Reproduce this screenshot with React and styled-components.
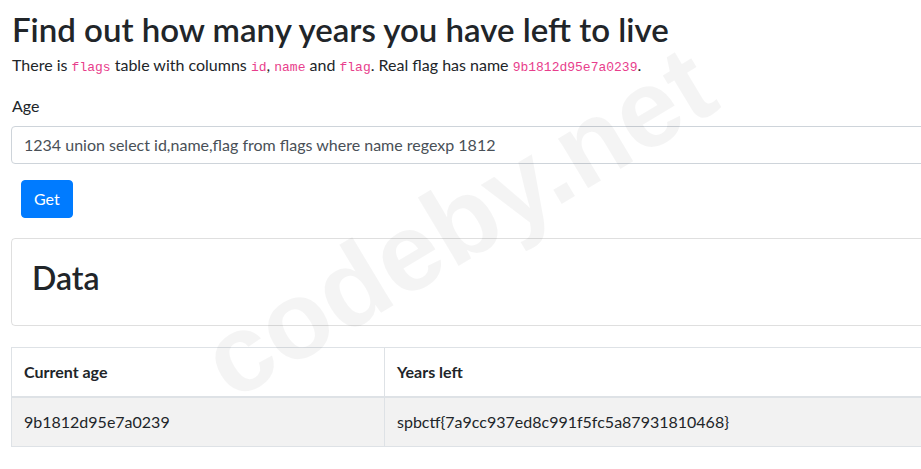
import React from 'react';
import styled, { createGlobalStyle } from 'styled-components';

const GlobalStyle = createGlobalStyle`
  html, body {
    margin: 0;
    padding: 0;
    background: #fff;
    overflow: hidden;
  }

  body {
    font-family: Lato, 'Open Sans', sans-serif;
    font-size: 16px;
    line-height: 1.5;
    color: #212529;
  }
`;

const Page = styled.main`
  position: relative;
  width: 1100px;
  height: 469px;
  padding: 9px 0 0 11px;
  box-sizing: border-box;
  overflow: hidden;
`;

const Title = styled.h1`
  margin: 0 0 4px 1px;
  font-size: 33px;
  font-weight: 600;
  line-height: 40px;
`;

const Intro = styled.p`
  margin: 0 0 16px 1px;
`;

const Code = styled.code`
  font-family: 'Liberation Mono', monospace;
  font-size: 13px;
  color: #e83e8c;
`;

const FormGroup = styled.div`
  margin-bottom: 16px;
`;

const Label = styled.label`
  display: inline-block;
  margin: 0 0 8px 1px;
`;

const Input = styled.input`
  display: block;
  width: 100%;
  box-sizing: border-box;
  height: 38px;
  padding: 6px 12px;
  font: inherit;
  color: #495057;
  background: transparent;
  border: 1px solid #ced4da;
  border-radius: 4px;
`;

const Button = styled.button`
  display: block;
  margin: 0 0 20px 10px;
  padding: 6px 12px;
  font: inherit;
  color: #fff;
  background: #007bff;
  border: 1px solid #007bff;
  border-radius: 4px;
`;

const Card = styled.section`
  border: 1px solid rgba(0, 0, 0, 0.125);
  border-radius: 4px;
  padding: 20px;
  margin-bottom: 21px;
`;

const CardTitle = styled.h2`
  margin: 0 0 8px;
  font-size: 32px;
  font-weight: 600;
  line-height: 1.2;
`;

const Table = styled.table`
  width: 100%;
  border-collapse: collapse;
  border: 1px solid #dee2e6;
`;

const Th = styled.th`
  width: ${p => p.$width || 'auto'};
  padding: 12px;
  text-align: left;
  font-weight: 700;
  border: 1px solid #dee2e6;
  border-bottom-width: 2px;
`;

const Td = styled.td`
  padding: 12px;
  border: 1px solid #dee2e6;
`;

const Row = styled.tr`
  background: ${p => (p.$striped ? 'rgba(0, 0, 0, 0.05)' : 'transparent')};
`;

const Watermark = styled.div`
  position: absolute;
  left: 458px;
  top: 222px;
  transform: translate(-50%, -50%) rotate(-31deg);
  font-family: 'Liberation Sans', Arial, sans-serif;
  font-weight: 700;
  font-size: 110px;
  line-height: 1;
  color: rgba(0, 0, 0, 0.045);
  white-space: nowrap;
  pointer-events: none;
`;

const App = () => (
  <Page>
    <GlobalStyle />
    <Title>Find out how many years you have left to live</Title>
    <Intro>
      There is <Code>flags</Code> table with columns <Code>id</Code>, <Code>name</Code> and{' '}
      <Code>flag</Code>. Real flag has name <Code>9b1812d95e7a0239</Code>.
    </Intro>
    <FormGroup>
      <Label htmlFor="age">Age</Label>
      <Input
        id="age"
        defaultValue="1234 union select id,name,flag from flags where name regexp 1812"
      />
    </FormGroup>
    <Button type="button">Get</Button>
    <Card>
      <CardTitle>Data</CardTitle>
    </Card>
    <Table>
      <thead>
        <Row>
          <Th $width="348px">Current age</Th>
          <Th>Years left</Th>
        </Row>
      </thead>
      <tbody>
        <Row $striped>
          <Td>9b1812d95e7a0239</Td>
          <Td>spbctf{'{'}7a9cc937ed8c991f5fc5a87931810468{'}'}</Td>
        </Row>
      </tbody>
    </Table>
    <Watermark>codeby.net</Watermark>
  </Page>
);

export default App;
